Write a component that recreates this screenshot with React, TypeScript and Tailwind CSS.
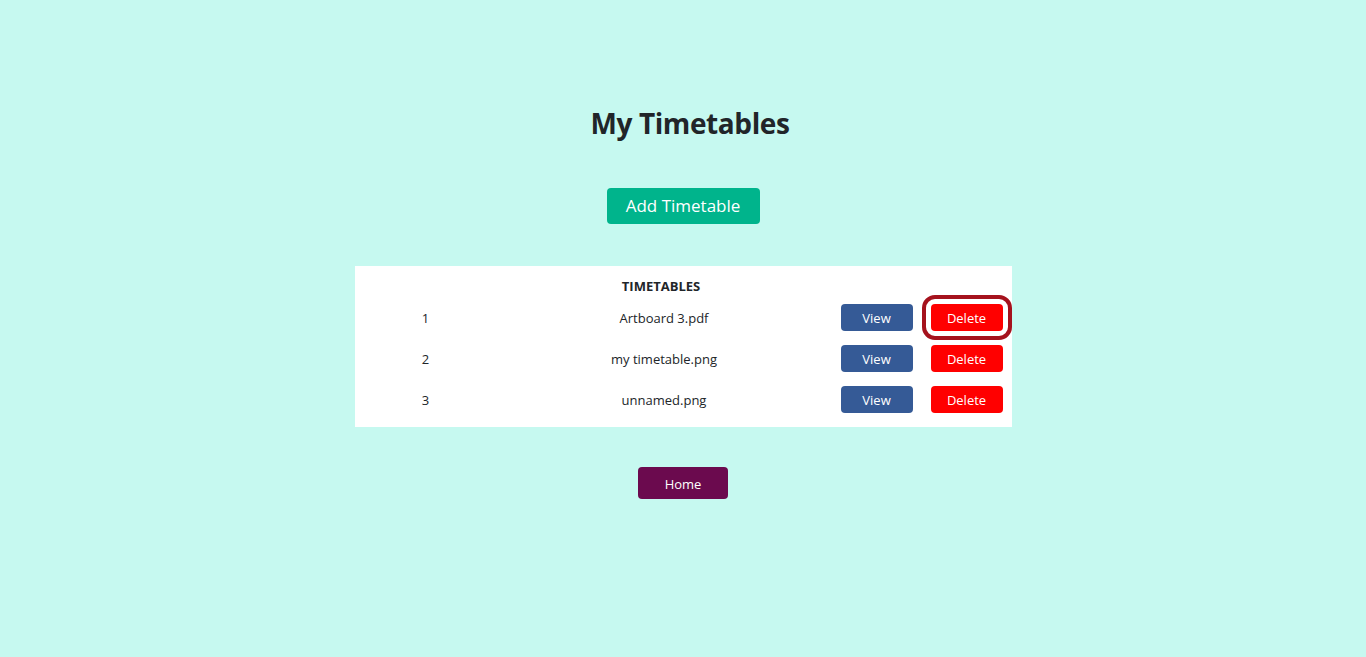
const font = { fontFamily: '"Open Sans", "Noto Sans", sans-serif' };

const rows = [
  { id: 1, name: "Artboard 3.pdf", focused: true },
  { id: 2, name: "my timetable.png", focused: false },
  { id: 3, name: "unnamed.png", focused: false },
];

export default function App() {
  return (
    <div
      className="min-h-[657px] w-full bg-[#c6f9f0] text-[#212529] flex flex-col items-center"
      style={font}
    >
      <h1 className="mt-[102px] pl-[14px] text-[28px] font-bold leading-[42px] tracking-[-0.4px]">
        My Timetables
      </h1>

      <button className="mt-[44px] h-[36px] w-[153px] rounded-[4px] bg-[#00b48c] text-[17px] text-white">
        Add Timetable
      </button>

      <div className="mt-[42px] w-[657px] bg-white pt-[8px] pb-[6px]">
        <div className="grid grid-cols-[142px_335px_90px_90px] h-[24px] items-center text-[13px] font-bold">
          <div />
          <div className="text-center pr-[6px] pt-[1px]">TIMETABLES</div>
          <div />
          <div />
        </div>
        {rows.map((r) => (
          <div
            key={r.id}
            className="grid grid-cols-[142px_335px_90px_90px] h-[41px] items-center text-[13px]"
          >
            <div className="text-center pt-[1px]">{r.id}</div>
            <div className="text-center pt-[1px]">{r.name}</div>
            <div className="flex justify-center self-start pt-[6px]">
              <button className="h-[27px] w-[72px] rounded-[4px] bg-[#355a96] pt-[2px] text-[13px] text-white">
                View
              </button>
            </div>
            <div className="flex justify-center self-start pt-[6px]">
              <button
                className={
                  r.focused
                    ? "h-[27px] w-[72px] rounded-[4px] bg-[#ff0000] pt-[2px] text-[13px] text-white outline-[4px] outline-solid outline-offset-[5px] outline-[#a5121d]"
                    : "h-[27px] w-[72px] rounded-[4px] bg-[#ff0000] pt-[2px] text-[13px] text-white"
                }
              >
                Delete
              </button>
            </div>
          </div>
        ))}
      </div>

      <button className="mt-[40px] h-[32px] w-[90px] rounded-[4px] bg-[#6b0a4e] pt-[3px] text-[13px] text-white">
        Home
      </button>
    </div>
  );
}
